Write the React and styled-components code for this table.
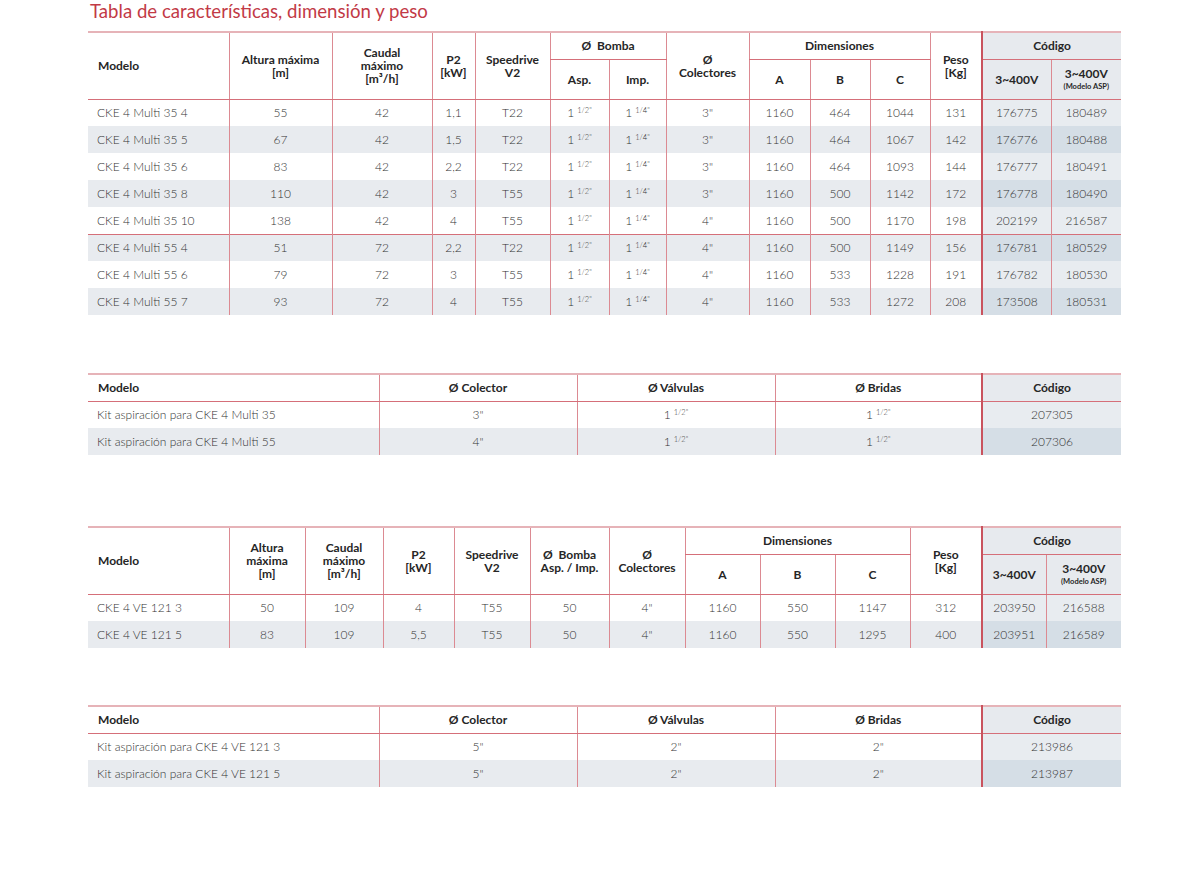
import React from "react";
import styled, { createGlobalStyle } from "styled-components";

const GlobalStyle = createGlobalStyle`
  html, body {
    margin: 0;
    padding: 0;
    background: #ffffff;
  }
  body {
    font-family: Lato, "Open Sans", "Liberation Sans", sans-serif;
    color: #3a3a3a;
  }
`;

const Page = styled.div`
  width: 1203px;
  padding-left: 88px;
  box-sizing: border-box;
`;

const Title = styled.h1`
  margin: 0;
  padding: 1px 0 0 2px;
  height: 30px;
  font-size: 18.6px;
  line-height: 20px;
  font-weight: 400;
  color: #c23a46;
`;

const Table = styled.table`
  width: 1033px;
  table-layout: fixed;
  border-collapse: collapse;
  border-top: 2px solid #e6b3b8;
  margin-top: ${(p) => p.$gap || 0}px;
`;

const HeadRow = styled.tr`
  height: ${(p) => p.$h}px;
`;

const Th = styled.th`
  padding: 0 ${(p) => (p.$align === "left" ? "10px" : "2px")};
  text-align: ${(p) => p.$align || "center"};
  vertical-align: middle;
  font-size: 12px;
  line-height: 13px;
  font-weight: 700;
  color: #262626;
  background: ${(p) => (p.$code ? "#e7eaee" : "#ffffff")};
  border-left: ${(p) =>
    p.$codeStart ? "2px solid #c9535e" : p.$first ? "none" : "1px solid #dc8a92"};
  border-bottom: 1px solid #d56f79;
`;

const Small = styled.span`
  display: block;
  margin-top: 3px;
  font-size: 7.5px;
  line-height: 8px;
  font-weight: 700;
`;

const Row = styled.tr`
  height: 27px;
  background: ${(p) => (p.$stripe ? "#e8ebef" : "#ffffff")};
  border-top: ${(p) => (p.$sep ? "1px solid #d56f79" : "none")};
`;

const Td = styled.td`
  padding: 0 ${(p) => (p.$align === "left" ? "8px" : "2px")} 0
    ${(p) => (p.$align === "left" ? "9px" : "2px")};
  text-align: ${(p) => p.$align || "center"};
  vertical-align: middle;
  font-size: 12px;
  font-weight: 300;
  color: #333333;
  white-space: nowrap;
  background: ${(p) => (p.$code ? (p.$stripe ? "#d5dee6" : "#e8ecf0") : "transparent")};
  border-left: ${(p) =>
    p.$codeStart ? "2px solid #c9535e" : p.$first ? "none" : "1px solid #dc8a92"};
`;

const Sup = styled.span`
  font-size: 7.5px;
  vertical-align: 4px;
  margin-left: 3px;
`;

const Frac = ({ n }) => (
  <>
    1<Sup>{n}"</Sup>
  </>
);

const multi = [
  ["CKE 4 Multi 35 4", "55", "42", "1,1", "T22", "1/2", "1/4", '3"', "1160", "464", "1044", "131", "176775", "180489"],
  ["CKE 4 Multi 35 5", "67", "42", "1,5", "T22", "1/2", "1/4", '3"', "1160", "464", "1067", "142", "176776", "180488"],
  ["CKE 4 Multi 35 6", "83", "42", "2,2", "T22", "1/2", "1/4", '3"', "1160", "464", "1093", "144", "176777", "180491"],
  ["CKE 4 Multi 35 8", "110", "42", "3", "T55", "1/2", "1/4", '3"', "1160", "500", "1142", "172", "176778", "180490"],
  ["CKE 4 Multi 35 10", "138", "42", "4", "T55", "1/2", "1/4", '4"', "1160", "500", "1170", "198", "202199", "216587"],
  ["CKE 4 Multi 55 4", "51", "72", "2,2", "T22", "1/2", "1/4", '4"', "1160", "500", "1149", "156", "176781", "180529"],
  ["CKE 4 Multi 55 6", "79", "72", "3", "T55", "1/2", "1/4", '4"', "1160", "533", "1228", "191", "176782", "180530"],
  ["CKE 4 Multi 55 7", "93", "72", "4", "T55", "1/2", "1/4", '4"', "1160", "533", "1272", "208", "173508", "180531"],
];

const ve = [
  ["CKE 4 VE 121 3", "50", "109", "4", "T55", "50", '4"', "1160", "550", "1147", "312", "203950", "216588"],
  ["CKE 4 VE 121 5", "83", "109", "5,5", "T55", "50", '4"', "1160", "550", "1295", "400", "203951", "216589"],
];

const kitsMulti = [
  ["Kit aspiración para CKE 4 Multi 35", '3"', <Frac n="1/2" />, <Frac n="1/2" />, "207305"],
  ["Kit aspiración para CKE 4 Multi 55", '4"', <Frac n="1/2" />, <Frac n="1/2" />, "207306"],
];

const kitsVe = [
  ["Kit aspiración para CKE 4 VE 121 3", '5"', '2"', '2"', "213986"],
  ["Kit aspiración para CKE 4 VE 121 5", '5"', '2"', '2"', "213987"],
];

const Cols = ({ widths }) => (
  <colgroup>
    {widths.map((w, i) => (
      <col key={i} style={{ width: w }} />
    ))}
  </colgroup>
);

const DataCells = ({ cells, stripe, codeFrom }) =>
  cells.map((c, i) => (
    <Td
      key={i}
      $align={i === 0 ? "left" : "center"}
      $first={i === 0}
      $code={i >= codeFrom}
      $codeStart={i === codeFrom}
      $stripe={stripe}
    >
      {c}
    </Td>
  ));

const MultiTable = () => (
  <Table>
    <Cols widths={[141, 103, 100, 43, 75, 59, 57, 83, 61, 60, 60, 52, 69, 70]} />
    <thead>
      <HeadRow $h={27}>
        <Th rowSpan={2} $align="left" $first>Modelo</Th>
        <Th rowSpan={2}>Altura máxima<br />[m]</Th>
        <Th rowSpan={2}>Caudal<br />máximo<br />[m³/h]</Th>
        <Th rowSpan={2}>P2<br />[kW]</Th>
        <Th rowSpan={2}>Speedrive<br />V2</Th>
        <Th colSpan={2}>Ø&nbsp; Bomba</Th>
        <Th rowSpan={2}>Ø<br />Colectores</Th>
        <Th colSpan={3}>Dimensiones</Th>
        <Th rowSpan={2}>Peso<br />[Kg]</Th>
        <Th colSpan={2} $code $codeStart>Código</Th>
      </HeadRow>
      <HeadRow $h={40}>
        <Th>Asp.</Th>
        <Th>Imp.</Th>
        <Th>A</Th>
        <Th>B</Th>
        <Th>C</Th>
        <Th $code $codeStart>3~400V</Th>
        <Th $code>3~400V<Small>(Modelo ASP)</Small></Th>
      </HeadRow>
    </thead>
    <tbody>
      {multi.map((r, idx) => {
        const cells = r.map((c, i) => (i === 5 || i === 6 ? <Frac n={c} /> : c));
        return (
          <Row key={idx} $stripe={idx % 2 === 1} $sep={idx === 5}>
            <DataCells cells={cells} stripe={idx % 2 === 1} codeFrom={12} />
          </Row>
        );
      })}
    </tbody>
  </Table>
);

const KitTable = ({ rows, gap }) => (
  <Table $gap={gap}>
    <Cols widths={[291, 198, 198, 207, 139]} />
    <thead>
      <HeadRow $h={27}>
        <Th $align="left" $first>Modelo</Th>
        <Th>Ø Colector</Th>
        <Th>Ø Válvulas</Th>
        <Th>Ø Bridas</Th>
        <Th $code $codeStart>Código</Th>
      </HeadRow>
    </thead>
    <tbody>
      {rows.map((r, idx) => (
        <Row key={idx} $stripe={idx % 2 === 1}>
          <DataCells cells={r} stripe={idx % 2 === 1} codeFrom={4} />
        </Row>
      ))}
    </tbody>
  </Table>
);

const VeTable = ({ gap }) => (
  <Table $gap={gap}>
    <Cols widths={[141, 76, 78, 71, 76, 79, 76, 75, 75, 75, 72, 64, 75]} />
    <thead>
      <HeadRow $h={27}>
        <Th rowSpan={2} $align="left" $first>Modelo</Th>
        <Th rowSpan={2}>Altura<br />máxima<br />[m]</Th>
        <Th rowSpan={2}>Caudal<br />máximo<br />[m³/h]</Th>
        <Th rowSpan={2}>P2<br />[kW]</Th>
        <Th rowSpan={2}>Speedrive<br />V2</Th>
        <Th rowSpan={2}>Ø&nbsp; Bomba<br />Asp. / Imp.</Th>
        <Th rowSpan={2}>Ø<br />Colectores</Th>
        <Th colSpan={3}>Dimensiones</Th>
        <Th rowSpan={2}>Peso<br />[Kg]</Th>
        <Th colSpan={2} $code $codeStart>Código</Th>
      </HeadRow>
      <HeadRow $h={40}>
        <Th>A</Th>
        <Th>B</Th>
        <Th>C</Th>
        <Th $code $codeStart>3~400V</Th>
        <Th $code>3~400V<Small>(Modelo ASP)</Small></Th>
      </HeadRow>
    </thead>
    <tbody>
      {ve.map((r, idx) => (
        <Row key={idx} $stripe={idx % 2 === 1}>
          <DataCells cells={r} stripe={idx % 2 === 1} codeFrom={11} />
        </Row>
      ))}
    </tbody>
  </Table>
);

const App = () => (
  <>
    <GlobalStyle />
    <Page>
      <Title>Tabla de características, dimensión y peso</Title>
      <MultiTable />
      <KitTable rows={kitsMulti} gap={58} />
      <VeTable gap={71} />
      <KitTable rows={kitsVe} gap={57} />
    </Page>
  </>
);

export default App;
